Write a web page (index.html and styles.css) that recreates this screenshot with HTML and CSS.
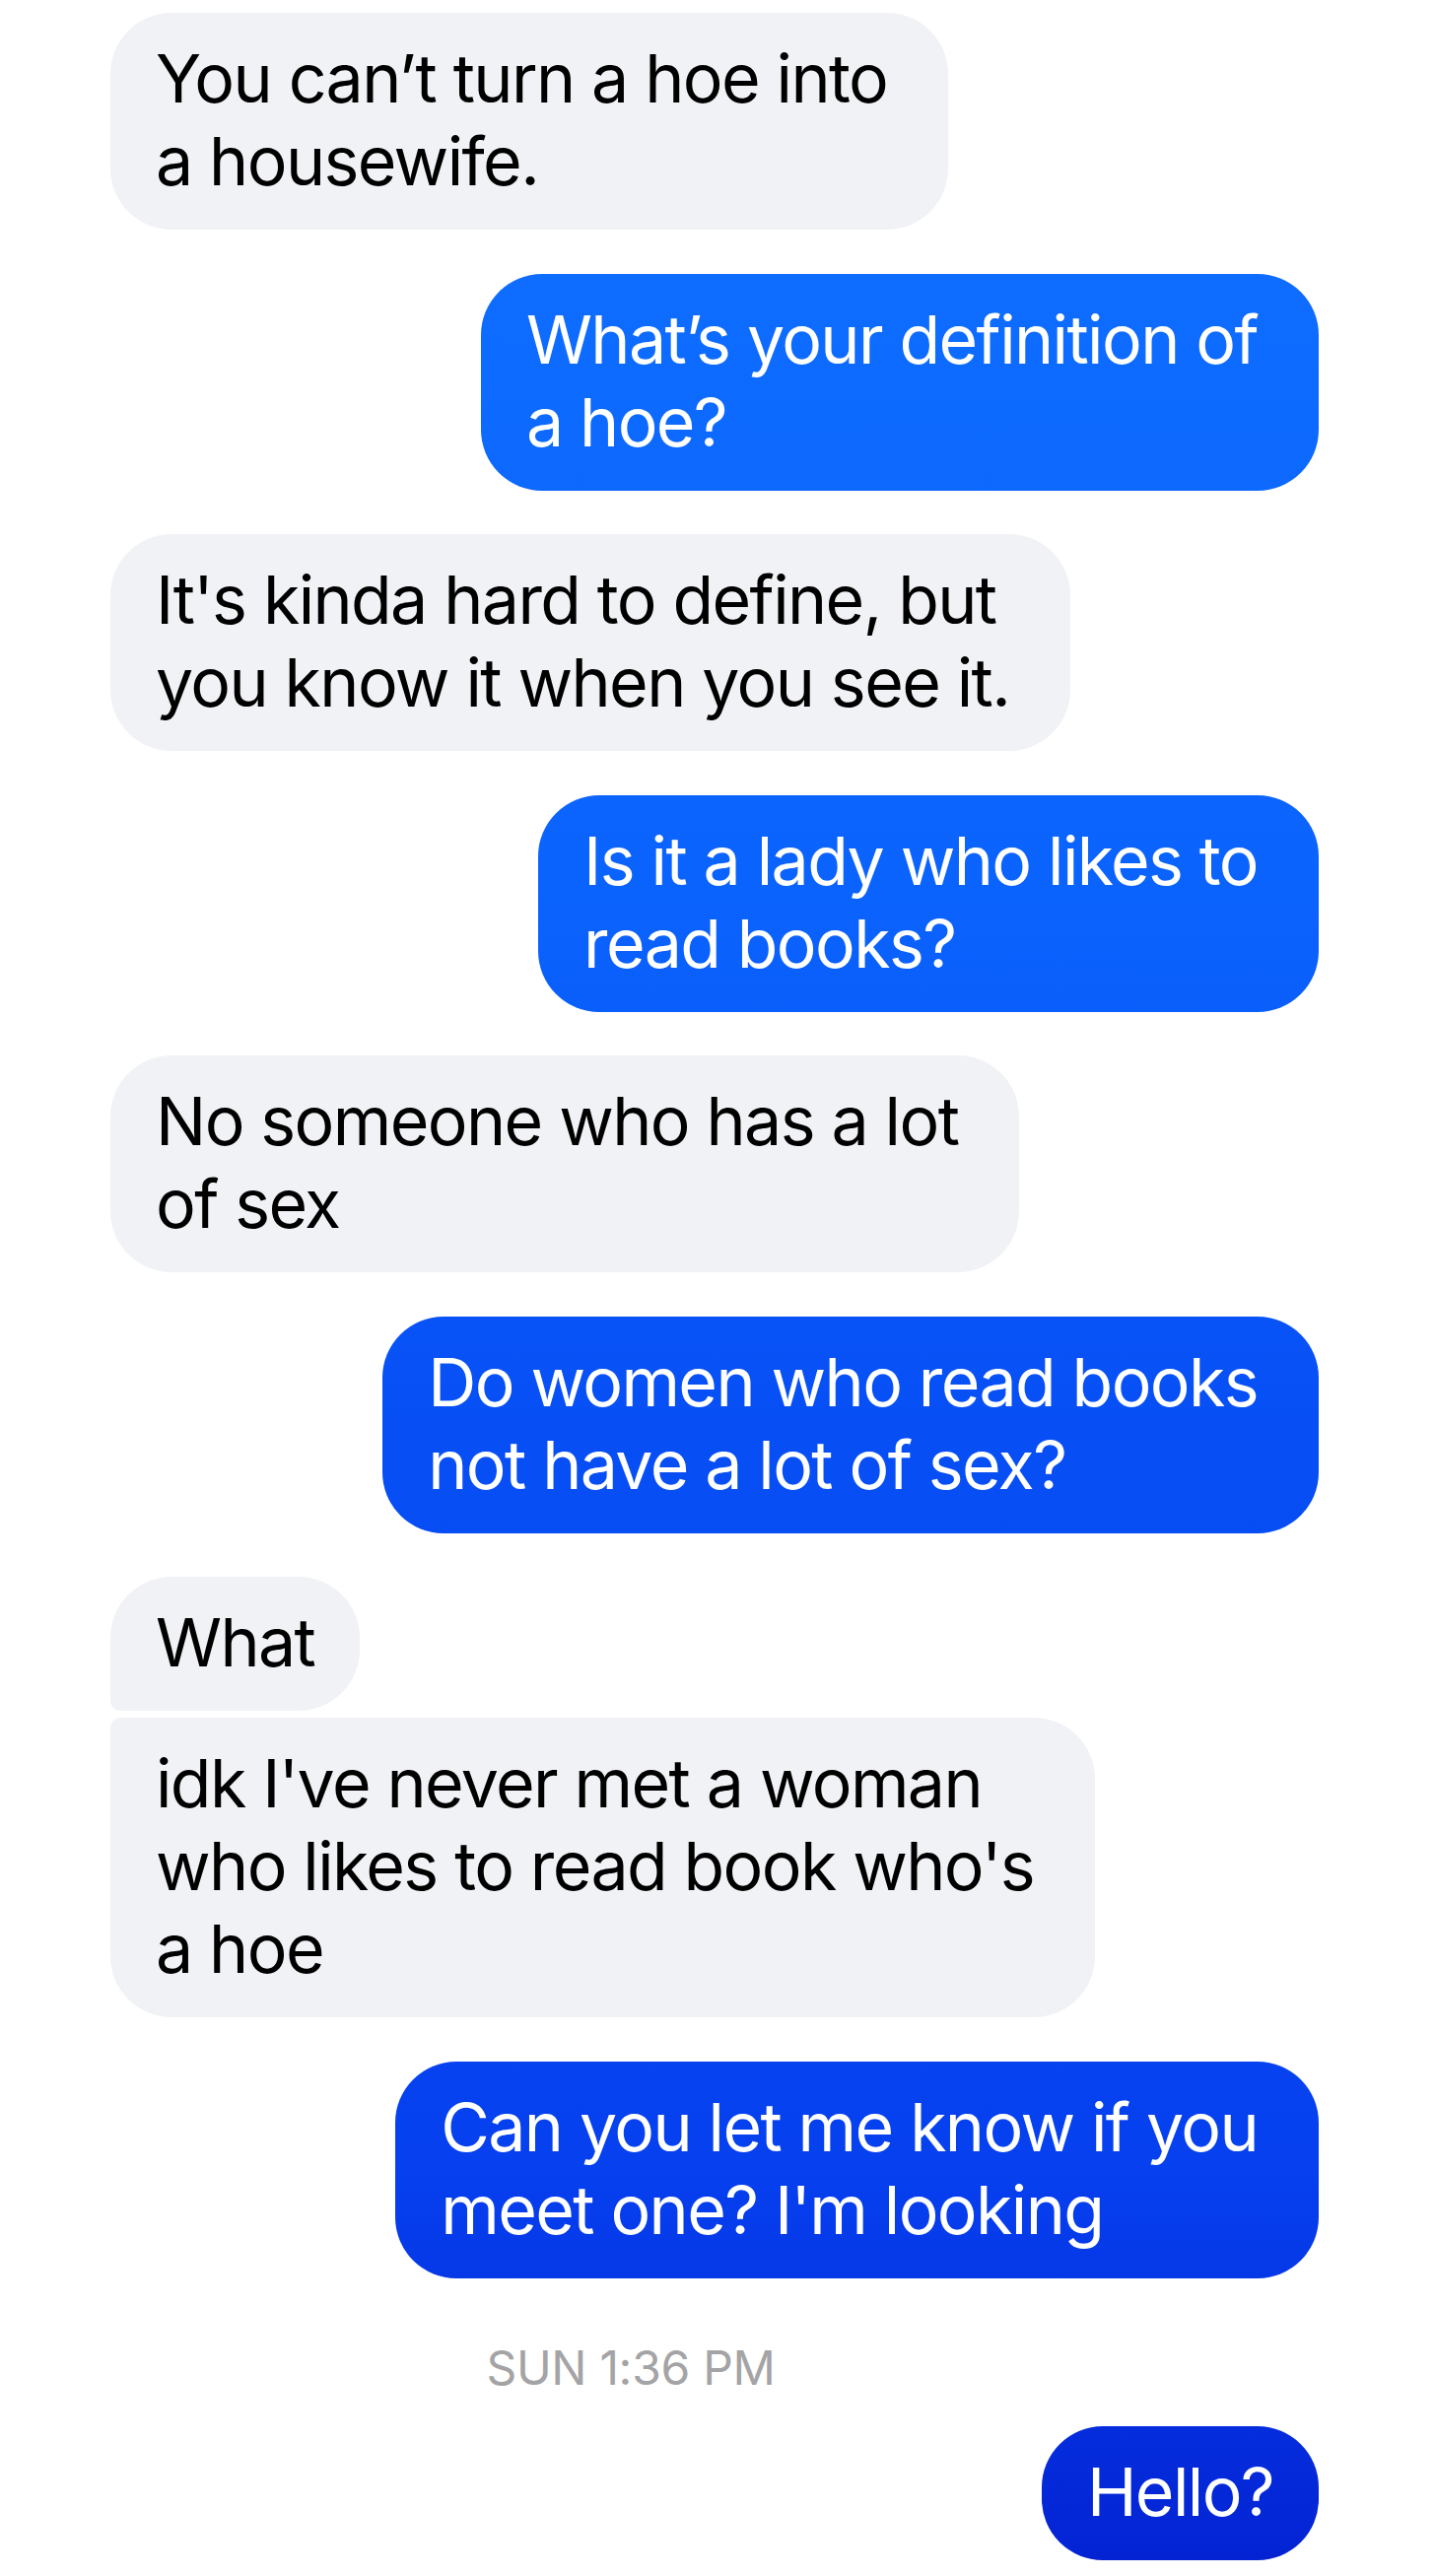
FILE: index.html
```html
<!DOCTYPE html>
<html lang="en">
<head>
<meta charset="utf-8">
<title>Messages</title>
<link rel="stylesheet" href="styles.css">
</head>
<body>
<main class="thread">
  <div class="row in"><p class="bubble gray multi">You can’t turn a hoe into<br>a housewife.</p></div>
  <div class="row out"><p class="bubble blue multi">What’s your definition of<br>a hoe?</p></div>
  <div class="row in"><p class="bubble gray multi">It's kinda hard to define, but<br>you know it when you see it.</p></div>
  <div class="row out"><p class="bubble blue multi">Is it a lady who likes to<br>read books?</p></div>
  <div class="row in"><p class="bubble gray multi">No someone who has a lot<br>of sex</p></div>
  <div class="row out"><p class="bubble blue multi">Do women who read books<br>not have a lot of sex?</p></div>
  <div class="row in group">
    <p class="bubble gray first">What</p>
    <p class="bubble gray multi last">idk I've never met a woman<br>who likes to read book who's<br>a hoe</p>
  </div>
  <div class="row out"><p class="bubble blue multi">Can you let me know if you<br>meet one? I'm looking</p></div>
  <div class="stamp">SUN 1:36 PM</div>
  <div class="row out"><p class="bubble blue">Hello?</p></div>
</main>
</body>
</html>
```
FILE: styles.css
```css
html, body {
  margin: 0;
  padding: 0;
  background: #ffffff;
}

body {
  font-family: Inter, "Noto Sans", "Liberation Sans", sans-serif;
  -webkit-font-smoothing: antialiased;
}

.thread {
  display: flex;
  flex-direction: column;
  gap: 44.5px;
  padding: 13px 118px 0 112px;
}

.row {
  display: flex;
}

.row.in {
  justify-content: flex-start;
}

.row.out {
  justify-content: flex-end;
}

.row.group {
  flex-direction: column;
  align-items: flex-start;
  gap: 7px;
}

.bubble {
  margin: 0;
  font-size: 68px;
  line-height: 84px;
  letter-spacing: -1.6px;
  padding: 24px 46px 28px 46px;
  border-radius: 62px;
  white-space: nowrap;
}

.bubble.multi {
  padding-right: 62px;
}

.gray {
  background: #f1f2f6;
  color: #000000;
}

.blue {
  color: #ffffff;
  background-color: #0b5cf8;
  background-image: linear-gradient(to bottom, #0f6eff 0px, #0e6cff 280px, #0b63fd 900px, #074ff5 1450px, #0640ef 2200px, #0428d8 2530px, #0322d2 2614px);
  background-attachment: fixed;
}

.group .first {
  border-bottom-left-radius: 10px;
}

.group .last {
  border-top-left-radius: 10px;
}

.stamp {
  display: flex;
  justify-content: center;
  padding-right: 170px;
  margin-top: 27px;
  margin-bottom: -6px;
  font-size: 48px;
  line-height: 40px;
  letter-spacing: -0.3px;
  color: #a4a4a6;
}
```
